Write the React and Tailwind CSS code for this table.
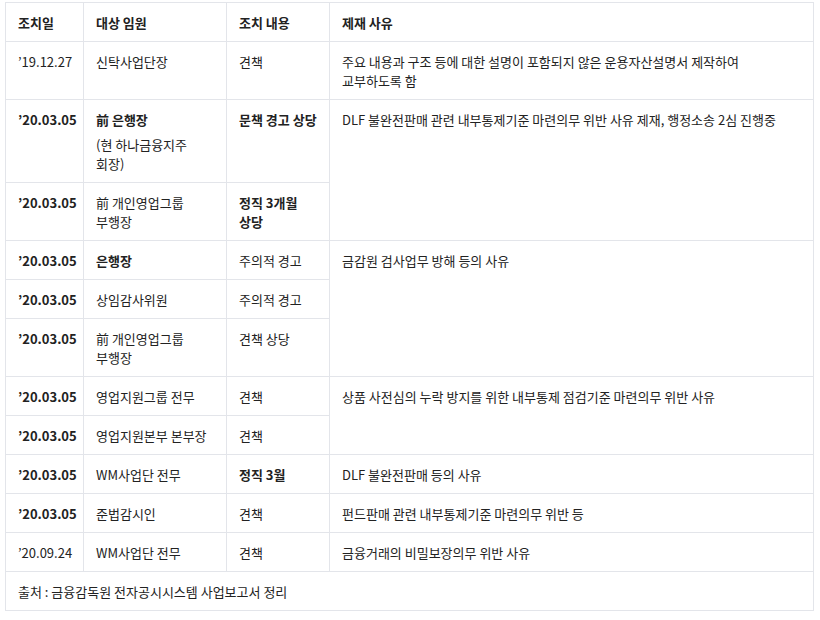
import React from "react";

const td = "border border-[#e3e5ea] px-3 py-[9.5px] align-top break-keep";

export default function App() {
  return (
    <div
      className="bg-white pl-[5px] pr-[6px] pt-[2px] pb-[6px] text-[13px] leading-[19px] text-[#222]"
      style={{ fontFamily: '"Noto Sans CJK KR", "Noto Sans", sans-serif' }}
    >
      <table className="w-full border-collapse table-fixed">
        <colgroup>
          <col className="w-[78px]" />
          <col className="w-[143px]" />
          <col className="w-[103px]" />
          <col />
        </colgroup>
        <thead>
          <tr>
            <th className={`${td} text-left font-bold`}>조치일</th>
            <th className={`${td} text-left font-bold`}>대상 임원</th>
            <th className={`${td} text-left font-bold`}>조치 내용</th>
            <th className={`${td} text-left font-bold`}>제재 사유</th>
          </tr>
        </thead>
        <tbody>
          <tr>
            <td className={td}>’19.12.27</td>
            <td className={td}>신탁사업단장</td>
            <td className={td}>견책</td>
            <td className={td}>
              주요 내용과 구조 등에 대한 설명이 포함되지 않은 운용자산설명서 제작하여 교부하도록 함
            </td>
          </tr>
          <tr>
            <td className={`${td} font-semibold`}>’20.03.05</td>
            <td className={td}>
              <p className="font-semibold">前 은행장</p>
              <p className="mt-[6px]">(현 하나금융지주 회장)</p>
            </td>
            <td className={`${td} font-semibold`}>문책 경고 상당</td>
            <td className={td} rowSpan={2}>
              DLF 불완전판매 관련 내부통제기준 마련의무 위반 사유 제재, 행정소송 2심 진행중
            </td>
          </tr>
          <tr>
            <td className={`${td} font-semibold`}>’20.03.05</td>
            <td className={td}>前 개인영업그룹 부행장</td>
            <td className={`${td} font-semibold`}>정직 3개월 상당</td>
          </tr>
          <tr>
            <td className={`${td} font-semibold`}>’20.03.05</td>
            <td className={`${td} font-semibold`}>은행장</td>
            <td className={td}>주의적 경고</td>
            <td className={td} rowSpan={3}>금감원 검사업무 방해 등의 사유</td>
          </tr>
          <tr>
            <td className={`${td} font-semibold`}>’20.03.05</td>
            <td className={td}>상임감사위원</td>
            <td className={td}>주의적 경고</td>
          </tr>
          <tr>
            <td className={`${td} font-semibold`}>’20.03.05</td>
            <td className={td}>前 개인영업그룹 부행장</td>
            <td className={td}>견책 상당</td>
          </tr>
          <tr>
            <td className={`${td} font-semibold`}>’20.03.05</td>
            <td className={td}>영업지원그룹 전무</td>
            <td className={td}>견책</td>
            <td className={td} rowSpan={2}>
              상품 사전심의 누락 방지를 위한 내부통제 점검기준 마련의무 위반 사유
            </td>
          </tr>
          <tr>
            <td className={`${td} font-semibold`}>’20.03.05</td>
            <td className={td}>영업지원본부 본부장</td>
            <td className={td}>견책</td>
          </tr>
          <tr>
            <td className={`${td} font-semibold`}>’20.03.05</td>
            <td className={td}>WM사업단 전무</td>
            <td className={`${td} font-semibold`}>정직 3월</td>
            <td className={td}>DLF 불완전판매 등의 사유</td>
          </tr>
          <tr>
            <td className={`${td} font-semibold`}>’20.03.05</td>
            <td className={td}>준법감시인</td>
            <td className={td}>견책</td>
            <td className={td}>펀드판매 관련 내부통제기준 마련의무 위반 등</td>
          </tr>
          <tr>
            <td className={td}>’20.09.24</td>
            <td className={td}>WM사업단 전무</td>
            <td className={td}>견책</td>
            <td className={td}>금융거래의 비밀보장의무 위반 사유</td>
          </tr>
          <tr>
            <td className={td} colSpan={4}>
              출처 : 금융감독원 전자공시시스템 사업보고서 정리
            </td>
          </tr>
        </tbody>
      </table>
    </div>
  );
}
